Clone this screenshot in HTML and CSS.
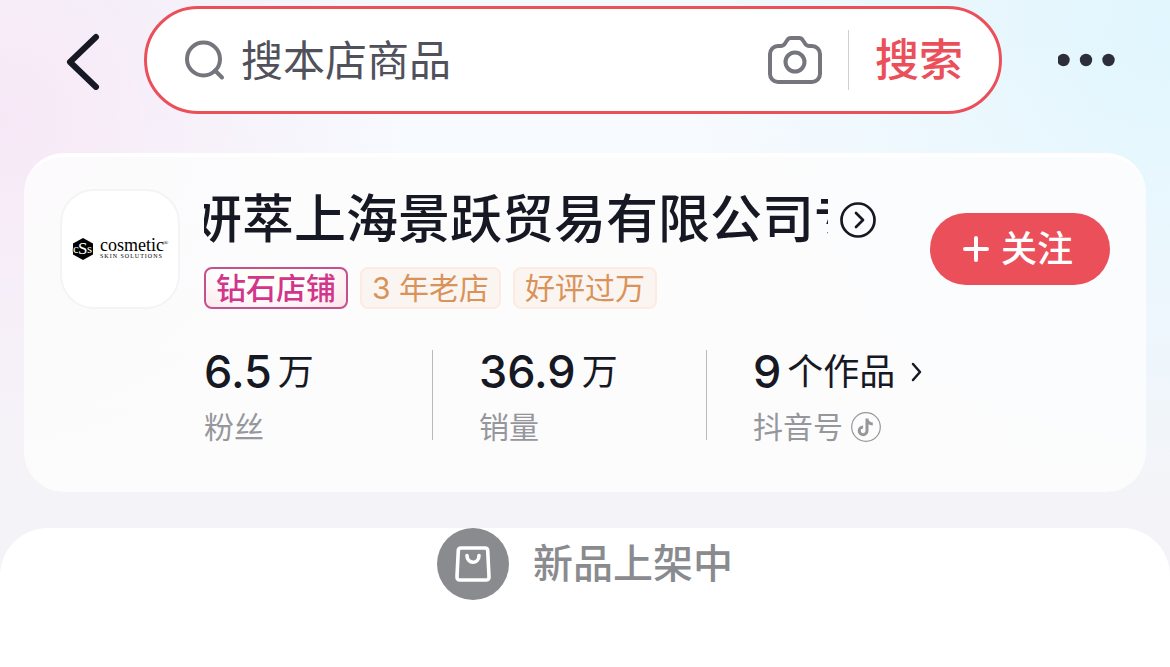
FILE: index.html
```html
<!DOCTYPE html>
<html lang="zh-CN">
<head>
    <meta charset="UTF-8">
    <title>店铺主页</title>
    <meta name="viewport" content="width=device-width, initial-scale=1.0">
    <link rel="stylesheet" href="styles.css">
</head>
<body>

<header class="topbar">
    <button class="icon-btn back" aria-label="返回">
        <svg width="36" height="60" viewBox="0 0 36 60" fill="none" stroke="#161823" stroke-width="6" stroke-linecap="round" stroke-linejoin="round"><path d="M32 7 6 32l26 25"/></svg>
    </button>
    <form class="search" role="search">
        <svg class="search-icon" width="42" height="42" viewBox="0 0 42 42" fill="none" stroke="#75767d" stroke-width="4" stroke-linecap="round"><circle cx="18.500" cy="20" r="16.500"/><path d="m30 31.500 7 7"/></svg>
        <input type="text" placeholder="搜本店商品" aria-label="搜本店商品">
        <button type="button" class="icon-btn" aria-label="拍照搜索">
            <svg width="54" height="48" viewBox="0 0 54 48" fill="none" stroke="#75767d" stroke-width="4" stroke-linejoin="round"><path d="M2 18a8 8 0 0 1 8-8h2.500q3 0 4.500-2.500L19.300 4q1.200-2 3.500-2h8.400q2.300 0 3.500 2L37 7.500q1.500 2.500 4.500 2.500H44a8 8 0 0 1 8 8v20a8 8 0 0 1-8 8H10a8 8 0 0 1-8-8z"/><circle cx="27" cy="26" r="9.500"/></svg>
        </button>
        <span class="search-line"></span>
        <button type="submit" class="search-btn">搜索</button>
    </form>
    <button class="icon-btn more" aria-label="更多">
        <svg width="58" height="14" viewBox="0 0 58 14" fill="#2c2e3a"><circle cx="5.500" cy="7" r="6.200"/><circle cx="28" cy="7" r="6.200"/><circle cx="50.500" cy="7" r="6.200"/></svg>
    </button>
</header>

<section class="shop-card">
    <div class="shop-head">
        <div class="avatar">
            <svg width="98" height="26" viewBox="0 0 98 26" role="img" aria-label="cosmetic skin solutions">
                <path d="M12 2 22 7.500v11L12 24 2 18.500v-11z"/>
                <g font-family="Liberation Serif, serif" fill="#fff" stroke="#000" stroke-width="1.500" paint-order="stroke">
                    <text x="2" y="17" font-size="13">c</text>
                    <text x="16" y="17" font-size="13">s</text>
                    <text x="7" y="18" font-size="17">S</text>
                </g>
                <g font-family="Liberation Serif, serif">
                    <text x="29" y="15" font-size="18">cosmetic</text>
                    <text x="92" y="9" font-size="7">®</text>
                    <text class="logo-sub" x="29" y="22" font-size="6">SKIN SOLUTIONS</text>
                </g>
            </svg>
        </div>
        <div class="shop-info">
            <div class="shop-title">
                <h1>妍萃上海景跃贸易有限公司专卖店</h1>
                <button class="icon-btn" aria-label="店铺详情">
                    <svg width="36" height="36" viewBox="0 0 36 36" fill="none" stroke="#161823" stroke-width="2.700" stroke-linecap="round" stroke-linejoin="round"><circle cx="18" cy="18" r="16.500"/><path d="m16 11 7 7-7 7"/></svg>
                </button>
            </div>
            <div class="tags">
                <span class="tag tag-diamond">钻石店铺</span>
                <span class="tag">3 年老店</span>
                <span class="tag">好评过万</span>
            </div>
        </div>
        <button class="follow">
            <svg width="26" height="26" viewBox="0 0 26 26" stroke="#fff" stroke-width="4" stroke-linecap="round"><path d="M13 2v22M2 13h22"/></svg>
            <span>关注</span>
        </button>
    </div>

    <div class="stats">
        <div class="stat">
            <div class="stat-value"><b>6.5</b>万</div>
            <div class="stat-label">粉丝</div>
        </div>
        <div class="stat">
            <div class="stat-value"><b>36.9</b>万</div>
            <div class="stat-label">销量</div>
        </div>
        <a class="stat" href="#works">
            <div class="stat-value"><b>9</b>个作品
                <svg class="stat-arrow" width="12" height="20" viewBox="0 0 12 20" fill="none" stroke="#161823" stroke-width="2.500" stroke-linecap="round" stroke-linejoin="round"><path d="m2 2 7 8-7 8"/></svg>
            </div>
            <div class="stat-label">抖音号
                <svg width="30" height="30" viewBox="0 0 30 30" fill="none" stroke="#96979c"><circle cx="15" cy="15" r="14.300" stroke-width="1.200"/><path d="M16 6.500v12.300a3.900 3.900 0 1 1-3.900-3.900M16 7.500c.5 2.500 2.700 4.300 5.800 4.400" stroke-width="3"/></svg>
            </div>
        </a>
    </div>
</section>

<main class="panel" id="works">
    <span class="bag">
        <svg width="36" height="36" viewBox="0 0 36 36" fill="none" stroke="#fff" stroke-width="3.600" stroke-linecap="round" stroke-linejoin="round"><path d="M6 2h24q2.500 0 2.700 2.500l1.300 26q.2 3.500-3 3.500H5q-3.200 0-3-3.500l1.300-26Q3.500 2 6 2z"/><path d="M12 9.500c0 9 12 9 12 0"/></svg>
    </span>
    <p>新品上架中</p>
</main>

</body>
</html>
```
FILE: styles.css
```css
* {
    box-sizing: border-box;
}
body {
    margin: 0;
    min-height: 100vh;
    display: flex;
    flex-direction: column;
    font-family: Inter, "Noto Sans CJK SC", sans-serif;
    color: #161823;
    background:
        radial-gradient(circle at 0 120px, #f7e8f6 0, rgba(247, 232, 246, 0) 400px),
        radial-gradient(circle at 100% 30px, #e1f6fe 0, rgba(225, 246, 254, 0) 480px),
        linear-gradient(#f3f8fc 0, #f7fafe 130px, #f4f4f8 500px);
}
button {
    font-family: inherit;
    border: none;
    padding: 0;
    cursor: pointer;
}
svg {
    display: block;
    flex: none;
}
.icon-btn {
    background: none;
}

/* top bar */
.topbar {
    display: flex;
    align-items: center;
    padding: 6px 54px 0 64px;
}
.search {
    flex: 1;
    min-width: 0;
    height: 108px;
    margin: 0 56px 0 44px;
    padding: 0 36px 0 38px;
    display: flex;
    align-items: center;
    background: #fff;
    border: 3px solid #eb4f5a;
    border-radius: 54px;
}
.search input {
    flex: 1;
    min-width: 0;
    margin-left: 14px;
    padding: 0;
    border: none;
    outline: none;
    background: none;
    font-family: inherit;
    font-size: 42px;
    color: #50515a;
}
.search input::placeholder {
    color: #50515a;
}
.search-line {
    width: 1px;
    height: 60px;
    margin: 0 26px;
    background: #d0d0d3;
}
.search-btn {
    background: none;
    color: #eb4f5a;
    font-size: 44px;
    line-height: 56px;
    font-weight: 500;
}

/* shop card */
.shop-card {
    margin: 39px 24px 36px;
    padding: 32px 36px 52px;
    border-top: 4px solid #fff;
    border-radius: 40px;
    background: rgba(253, 253, 253, 0.85);
}
.shop-head {
    display: flex;
}
.avatar {
    flex: none;
    width: 120px;
    height: 120px;
    margin-right: 24px;
    display: flex;
    align-items: center;
    justify-content: center;
    background: #fff;
    border: 2px solid #f4f4f4;
    border-radius: 34px;
}
.logo-sub {
    letter-spacing: 1px;
}
.shop-info {
    flex: 1;
    min-width: 0;
}
.shop-title {
    display: flex;
    align-items: center;
    gap: 12px;
    height: 62px;
}
.shop-title h1 {
    flex: 1;
    min-width: 0;
    margin: 0;
    overflow: hidden;
    white-space: nowrap;
    text-indent: -14px;
    font-size: 52px;
    line-height: 66px;
    font-weight: 500;
}
.tags {
    display: flex;
    gap: 12px;
    margin-top: 16px;
}
.tag {
    height: 42px;
    padding: 0 10px;
    border: 2px solid #fdebe2;
    border-radius: 8px;
    background: #fbf5f1;
    color: #d9935a;
    font-size: 30px;
    line-height: 38px;
    white-space: nowrap;
}
.tag-diamond {
    border-color: #c4518f;
    color: #d1368b;
    font-weight: 500;
    background: radial-gradient(ellipse at 45% 0, #fffff0, #fff 45%, #fae4e8);
}
.follow {
    flex: none;
    width: 180px;
    height: 72px;
    margin: 24px 0 0 54px;
    padding-right: 4px;
    display: flex;
    align-items: center;
    justify-content: center;
    gap: 12px;
    border-radius: 36px;
    background: #eb4f5a;
    color: #fff;
    font-size: 36px;
    line-height: 44px;
    font-weight: 500;
}

/* numbers */
.stats {
    display: grid;
    grid-template-columns: 229px 274px 1fr;
    margin: 41px 0 0 144px;
}
.stat {
    height: 90px;
    color: inherit;
    text-decoration: none;
}
.stat + .stat {
    padding-left: 46px;
}
.stat:not(:last-child) {
    border-right: 1px solid #b9babd;
}
.stat-value {
    display: flex;
    align-items: center;
    height: 44px;
    font-size: 36px;
    line-height: 44px;
}
.stat-value b {
    margin-right: 6px;
    font-size: 45px;
    font-weight: 500;
}
.stat-arrow {
    margin-left: 16px;
}
.stat-label {
    display: flex;
    align-items: center;
    gap: 8px;
    margin-top: 16px;
    font-size: 30px;
    line-height: 34px;
    color: #96979c;
}

/* goods panel */
.panel {
    flex: 1;
    display: flex;
    align-items: flex-start;
    justify-content: center;
    gap: 24px;
    background: #fff;
    border-radius: 48px 48px 0 0;
}
.bag {
    width: 72px;
    height: 72px;
    display: flex;
    align-items: center;
    justify-content: center;
    border-radius: 50%;
    background: #8a8b8f;
}
.panel p {
    margin: 0;
    font-size: 40px;
    line-height: 72px;
    font-weight: 500;
    color: #8a8b8f;
}
```
